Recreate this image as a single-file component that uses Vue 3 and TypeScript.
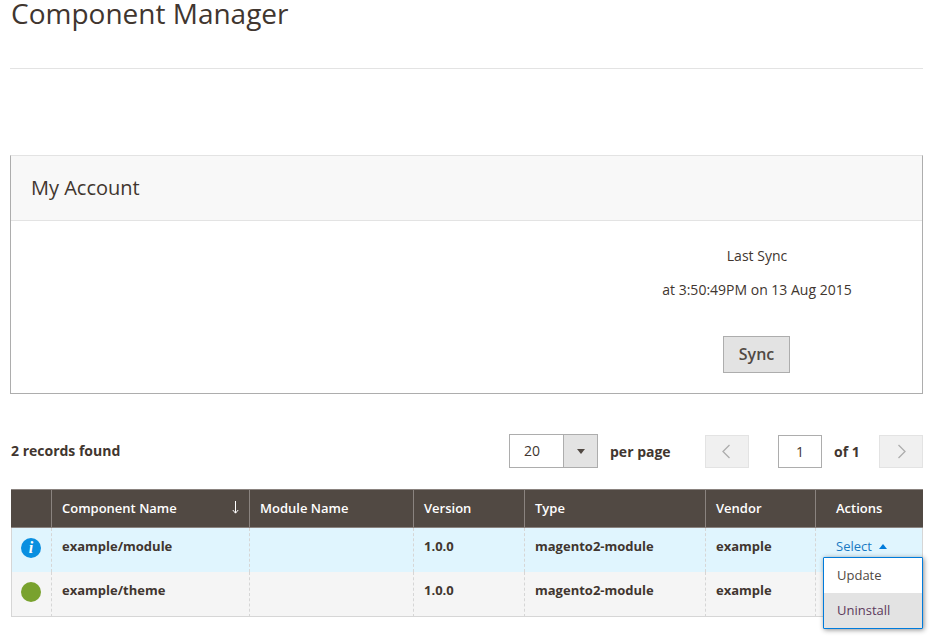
<script setup lang="ts">
interface Row {
  name: string;
  version: string;
  type: string;
  vendor: string;
  status: "info" | "ok";
}

const columns = ["Module Name", "Version", "Type", "Vendor", "Actions"];

const rows: Row[] = [
  { name: "example/module", version: "1.0.0", type: "magento2-module", vendor: "example", status: "info" },
  { name: "example/theme", version: "1.0.0", type: "magento2-module", vendor: "example", status: "ok" },
];
</script>

<template>
  <div class="page">
    <h1 class="title">Component Manager</h1>

    <section class="panel">
      <h2 class="panel-head">My Account</h2>
      <div class="panel-body">
        <div class="sync">
          <p>Last Sync</p>
          <p>at 3:50:49PM on 13 Aug 2015</p>
          <button class="sync-btn" type="button">Sync</button>
        </div>
      </div>
    </section>

    <div class="toolbar">
      <strong class="records">2 records found</strong>
      <div class="per-page">
        <div class="select">
          <span class="select-value">20</span>
          <span class="select-arrow"></span>
        </div>
        <strong>per page</strong>
      </div>
      <div class="pager">
        <button class="page-btn" type="button" aria-label="Previous">
          <svg width="11" height="17" viewBox="0 0 11 17"><path d="M7.5 2 1 8.5 7.5 15" fill="none" stroke="#adadad" stroke-width="1.3" /></svg>
        </button>
        <span class="page-input">1</span>
        <strong class="page-total">of 1</strong>
        <button class="page-btn" type="button" aria-label="Next">
          <svg width="11" height="17" viewBox="0 0 11 17"><path d="M2.5 2 9 8.5 2.5 15" fill="none" stroke="#adadad" stroke-width="1.3" /></svg>
        </button>
      </div>
    </div>

    <div class="grid-wrap">
      <table class="grid">
        <colgroup>
          <col style="width: 40px" />
          <col style="width: 198px" />
          <col style="width: 164px" />
          <col style="width: 111px" />
          <col style="width: 181px" />
          <col style="width: 110px" />
          <col style="width: 108px" />
        </colgroup>
        <thead>
          <tr>
            <th></th>
            <th>
              <div class="sort-head">
                Component Name
                <svg width="7" height="13" viewBox="0 0 7 13"><path d="M3.5 0v12M.8 9l2.7 3.2L6.2 9" fill="none" stroke="#fff" stroke-width="1" /></svg>
              </div>
            </th>
            <th v-for="col in columns" :key="col">{{ col }}</th>
          </tr>
        </thead>
        <tbody>
          <tr v-for="(row, i) in rows" :key="row.name" :class="row.status === 'info' ? 'row-info' : 'row-plain'">
            <td class="status-cell">
              <span :class="['status', row.status]">
                <i v-if="row.status === 'info'">i</i>
              </span>
            </td>
            <td>{{ row.name }}</td>
            <td></td>
            <td>{{ row.version }}</td>
            <td>{{ row.type }}</td>
            <td>{{ row.vendor }}</td>
            <td class="action-cell">
              <template v-if="i === 0">
                <span class="select-link">Select<span class="caret"></span></span>
                <ul class="menu">
                  <li>Update</li>
                  <li class="active">Uninstall</li>
                </ul>
              </template>
            </td>
          </tr>
        </tbody>
      </table>
    </div>
  </div>
</template>

<style>
html,
body {
  margin: 0;
  background: #fff;
}
</style>

<style scoped>
.page {
  box-sizing: border-box;
  width: 933px;
  height: 636px;
  overflow: hidden;
  padding: 0 10px;
  font-family: "Open Sans", sans-serif;
  font-size: 14px;
  color: #41362f;
}

.title {
  margin: 0;
  height: 68px;
  box-sizing: border-box;
  padding: 0 0 0 1px;
  font-size: 28px;
  font-weight: 400;
  line-height: 26px;
  color: #41362f;
  box-shadow: 0 1px 0 #e3e3e3;
}

.panel {
  margin-top: 87px;
  height: 239px;
  box-sizing: border-box;
  border: 1px solid #adadad;
  border-top-color: #e3e3e3;
}

.panel-head {
  margin: 0;
  height: 65px;
  box-sizing: border-box;
  padding-left: 20px;
  background: #f8f8f8;
  border-bottom: 1px solid #e3e3e3;
  font-size: 20px;
  font-weight: 400;
  line-height: 64px;
}

.panel-body {
  display: flex;
  justify-content: flex-end;
  padding: 25px 25px 0 0;
}

.sync {
  width: 280px;
  text-align: center;
}

.sync p {
  margin: 0 0 15px;
  line-height: 19px;
}

.sync-btn {
  display: block;
  margin: 37px 0 0 106px;
  width: 67px;
  height: 37px;
  padding: 0 0 2px;
  background: #e3e3e3;
  border: 1px solid #adadad;
  font-family: inherit;
  font-size: 16px;
  font-weight: 600;
  color: #514943;
}

.toolbar {
  display: flex;
  align-items: center;
  margin-top: 40px;
  height: 34px;
}

.records {
  width: 499px;
  margin-bottom: 2px;
  padding-left: 1px;
  box-sizing: border-box;
  font-weight: 700;
}

.per-page {
  display: flex;
  align-items: center;
  width: 196px;
}

.select {
  display: flex;
  width: 89px;
  height: 34px;
  box-sizing: border-box;
  border: 1px solid #adadad;
  margin-right: 12px;
}

.select-value {
  flex: 1;
  padding-left: 14px;
  line-height: 32px;
}

.select-arrow {
  position: relative;
  width: 33px;
  background: #e3e3e3;
  border-left: 1px solid #adadad;
}

.select-arrow::after {
  content: "";
  position: absolute;
  left: 13px;
  top: 14px;
  border: 4px solid transparent;
  border-top: 5px solid #514943;
  border-bottom: 0;
}

.pager {
  display: flex;
  align-items: center;
  align-self: flex-end;
}

.page-btn {
  display: flex;
  align-items: center;
  justify-content: center;
  width: 44px;
  height: 33px;
  padding: 0;
  background: #f0f0f0;
  border: 1px solid #e3e3e3;
}

.page-input {
  width: 44px;
  height: 33px;
  margin-left: 29px;
  box-sizing: border-box;
  border: 1px solid #adadad;
  text-align: center;
  line-height: 31px;
}

.page-total {
  width: 45px;
  margin-left: 12px;
  font-weight: 700;
}

.grid-wrap {
  margin-top: 21px;
  padding-left: 1px;
}

.grid {
  width: 912px;
  table-layout: fixed;
  border-collapse: separate;
  border-spacing: 0;
}

.grid th {
  height: 39px;
  box-sizing: border-box;
  padding: 0 10px 2px;
  background: #514943;
  border-left: 1px solid #8a837f;
  border-top: 1px solid #8a837f;
  border-bottom: 1px solid #8a837f;
  color: #fff;
  font-size: 13px;
  font-weight: 600;
  text-align: left;
}

.grid th:first-child {
  border-left: 0;
}

.grid th:last-child,
.grid td:last-child {
  padding-left: 20px;
}

.sort-head {
  display: flex;
  align-items: center;
  justify-content: space-between;
}

.grid td {
  box-sizing: border-box;
  height: 44px;
  padding: 9px 10px 17px;
  border-left: 1px dashed #d6d6d6;
  font-weight: 700;
  font-size: 13px;
  line-height: 18px;
  vertical-align: top;
  color: #41362f;
}

.grid td:first-child {
  border-left: 1px solid #d6d6d6;
}

.grid td:last-child {
  border-right: 1px solid #d6d6d6;
}

.row-info td {
  background: #e0f5fe;
}

.row-plain td {
  background: #f5f5f5;
  border-bottom: 1px solid #d6d6d6;
  height: 45px;
}

.grid td.status-cell {
  padding: 10px 0 0 9px;
}

.status {
  display: flex;
  align-items: center;
  justify-content: center;
  width: 20px;
  height: 20px;
  border-radius: 50%;
}

.status.info {
  background: #0a8fe0;
}

.status.ok {
  background: #79a22e;
}

.status i {
  font-family: "Liberation Serif", serif;
  font-size: 16px;
  font-weight: 700;
  font-style: italic;
  line-height: 20px;
  color: #fff;
}

.action-cell {
  position: relative;
}

.select-link {
  font-size: 13px;
  font-weight: 400;
  color: #1979c3;
}

.caret {
  display: inline-block;
  margin-left: 7px;
  vertical-align: 2px;
  border: 4px solid transparent;
  border-bottom: 5px solid #007bdb;
  border-top: 0;
}

.menu {
  position: absolute;
  top: 29px;
  right: -1px;
  z-index: 2;
  width: 100px;
  box-sizing: border-box;
  margin: 0;
  padding: 0;
  list-style: none;
  background: #fff;
  border: 1px solid #007bdb;
  border-radius: 1px;
  box-shadow: 1px 1px 5px rgba(0, 0, 0, 0.45);
}

.menu li {
  height: 35px;
  padding: 8px 13px;
  box-sizing: border-box;
  font-size: 13px;
  font-weight: 400;
  line-height: 18px;
  color: #514943;
}

.menu li.active {
  background: #e3e3e3;
  color: #5c3a5c;
}
</style>
